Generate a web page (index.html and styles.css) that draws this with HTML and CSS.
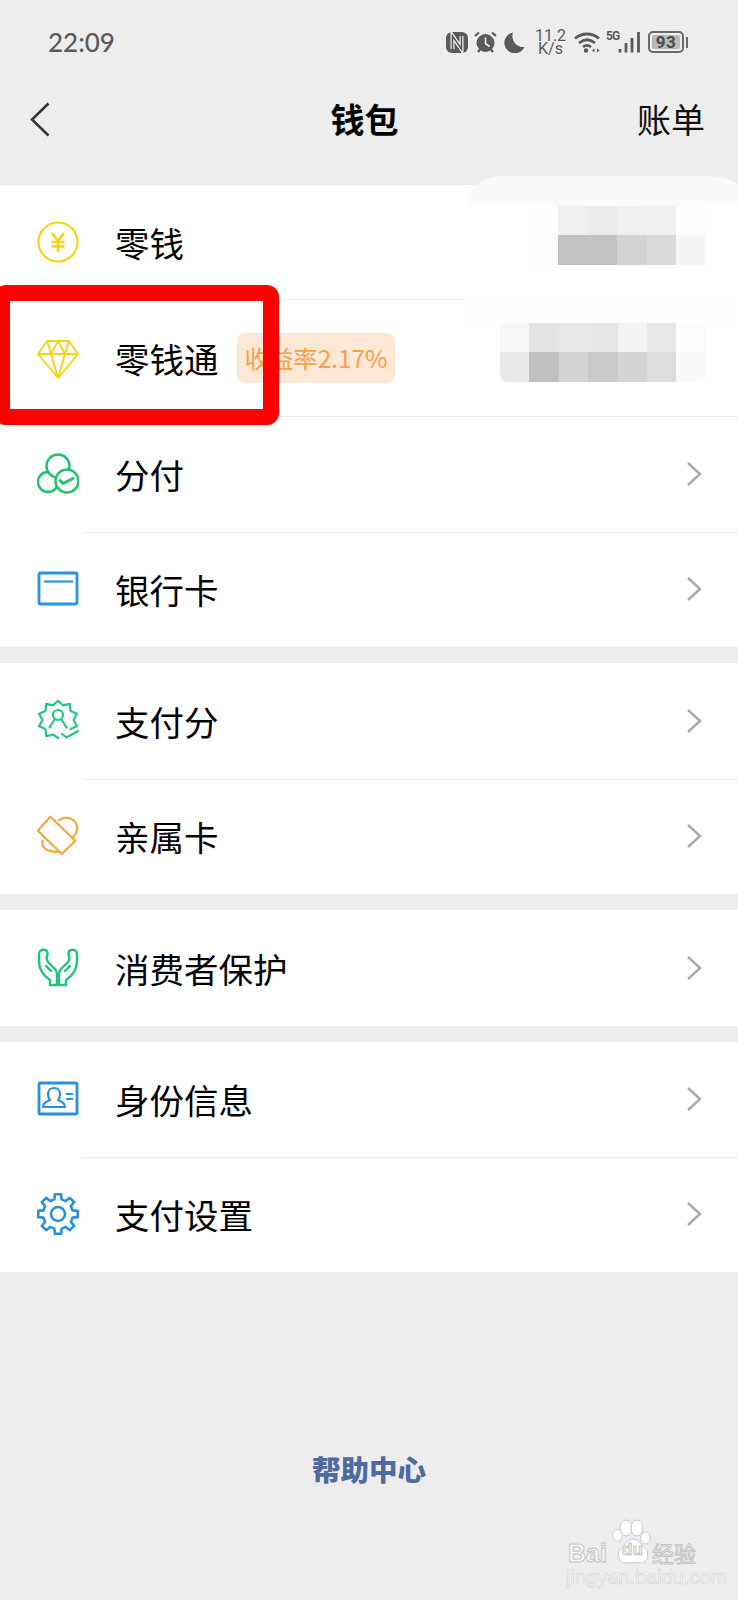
FILE: index.html
```html
<!DOCTYPE html>
<html lang="zh-CN">
<head>
<meta charset="utf-8">
<title>钱包</title>
<link rel="stylesheet" href="styles.css">
</head>
<body>
<div class="app">
  <header class="top">
    <div class="status">
      <span class="time">22:09</span>
      <div class="status-icons">
        <svg class="s-nfc" viewBox="0 0 22 21"><rect x="0" y="0" width="22" height="21" rx="6" fill="#5a5a5a"/><path d="M6.500 17V4l9 13V4" fill="none" stroke="#ededed" stroke-width="4"/><path d="M6.500 17V4l9 13V4" fill="none" stroke="#5a5a5a" stroke-width="1.600"/></svg>
        <svg class="s-alarm" viewBox="0 0 23 22"><circle cx="11.500" cy="12" r="9" fill="#5a5a5a"/><path d="M11.500 6.500v6l4 3" fill="none" stroke="#ededed" stroke-width="1.600"/><path d="M1 5l4-3.500M22 5l-4-3.500M4 21l2-2.500M19 21l-2-2.500" stroke="#5a5a5a" stroke-width="2.200"/></svg>
        <svg class="s-moon" viewBox="0 0 21 21"><path d="M9 .5A10.500 10.500 0 1 0 20.500 15 11 11 0 0 1 9 .5z" fill="#5a5a5a"/></svg>
        <div class="speed"><span>11.2</span><span>K/s</span></div>
        <svg class="s-wifi" viewBox="0 0 26 22"><path d="M1 7.500C8 1.500 18 1.500 25 7.500M5 12c5-4 11-4 16 0M9 16c2.500-2 5.500-2 8 0" fill="none" stroke="#5a5a5a" stroke-width="2.800"/><circle cx="12" cy="19.500" r="2.200" fill="#5a5a5a"/><path d="M18 19.500l2.500-2v4zM25.500 19.500l-2.500-2v4z" fill="#5a5a5a"/></svg>
        <div class="net">
          <span class="five-g">5G</span>
          <svg class="s-signal" viewBox="0 0 23 22"><g stroke="#5a5a5a" stroke-width="2.800"><path d="M3 18v3.500M9 12v9.500M15 7v14.500M21.500 1v20.500"/></g></svg>
        </div>
        <div class="battery"><div class="battery-body"><span class="battery-level">93</span></div><i class="battery-nub"></i></div>
      </div>
    </div>
    <nav class="nav">
      <div class="nav-side"><svg class="back" viewBox="0 0 20 35"><path d="M18.500 1.500L2 17.500l16.500 16" fill="none" stroke="#333" stroke-width="2.500"/></svg></div>
      <h1 class="title">钱包</h1>
      <div class="nav-side nav-right">账单</div>
    </nav>
  </header>

  <section class="group">
    <div class="row row-first">
      <svg class="ico" viewBox="0 0 42 42"><circle cx="21" cy="21" r="19.500" fill="none" stroke="#f8d20f" stroke-width="2"/><path d="M15 12l6 8 6-8M14.500 21h13M14.500 25.500h13M21 20v11" fill="none" stroke="#f8d20f" stroke-width="2.400"/></svg>
      <span class="label">零钱</span>
    </div>
    <div class="row row-second">
      <svg class="ico" viewBox="0 0 42 42"><path d="M10 4H32L41 17 21 41 1 17Z M1 17H41 M10 4L14 17 21 41 28 17 32 4 M14 17L21 4 28 17" fill="none" stroke="#f8d20f" stroke-width="1.800" stroke-linejoin="round"/></svg>
      <span class="label">零钱通</span>
      <span class="badge">收益率2.17%</span>
    </div>
    <div class="row">
      <svg class="ico" viewBox="0 0 42 42"><g fill="#fff" stroke="#1ec26e" stroke-width="2.400"><circle cx="11" cy="29" r="10"/><circle cx="21" cy="13" r="11.500"/><circle cx="30" cy="28" r="11.500"/></g><path d="M22.500 26.500L26 30.500 37 25" fill="none" stroke="#1ec26e" stroke-width="2.800"/></svg>
      <span class="label">分付</span>
      <svg class="chev" viewBox="0 0 16 26"><path d="M2 2l12 11L2 24" fill="none" stroke="#ababab" stroke-width="2.500"/></svg>
    </div>
    <div class="row">
      <svg class="ico" viewBox="0 0 42 42"><rect x="2" y="5" width="38" height="31" rx="1.500" fill="none" stroke="#2a93e0" stroke-width="2.800"/><path d="M7 13.500H36" stroke="#2a93e0" stroke-width="2.200"/></svg>
      <span class="label">银行卡</span>
      <svg class="chev" viewBox="0 0 16 26"><path d="M2 2l12 11L2 24" fill="none" stroke="#ababab" stroke-width="2.500"/></svg>
    </div>
  </section>

  <section class="group">
    <div class="row">
      <svg class="ico" viewBox="0 0 42 42"><g fill="none" stroke="#25c77f" stroke-width="2.200" stroke-linejoin="round" stroke-linecap="round"><path d="M33.500 29.100L40 26.200 36.500 20 40 13.800 33.500 10.900 32.800 3.800 25.800 5.300 21 0.800 16.200 5.300 9.200 3.800 8.500 10.900 2 13.800 5.500 20 2 26.200 8.500 29.100 9.200 36.200 16.200 34.700 21 38"/><circle cx="21" cy="15" r="5"/><path d="M17.500 19.500L12.500 27.500M24.500 19.500L29.500 27.500M25 34l4.500 3.500L41 31"/></g></svg>
      <span class="label">支付分</span>
      <svg class="chev" viewBox="0 0 16 26"><path d="M2 2l12 11L2 24" fill="none" stroke="#ababab" stroke-width="2.500"/></svg>
    </div>
    <div class="row">
      <svg class="ico" viewBox="0 0 42 42"><g fill="none" stroke="#f2a83e" stroke-width="2.200" stroke-linejoin="round" stroke-linecap="round"><path d="M13.300 1.700L.9 15.700 24.700 39 38.300 25.700Z"/><path d="M22 5C30 1 38 3 40 11 41 16 38 21 35 23"/><path d="M5.700 25.700C4 32 9 37 20.700 37"/></g></svg>
      <span class="label">亲属卡</span>
      <svg class="chev" viewBox="0 0 16 26"><path d="M2 2l12 11L2 24" fill="none" stroke="#ababab" stroke-width="2.500"/></svg>
    </div>
  </section>

  <section class="group">
    <div class="row">
      <svg class="ico" viewBox="0 0 42 42"><g fill="none" stroke="#1fc679" stroke-width="2.400" stroke-linejoin="round" stroke-linecap="round"><path d="M20 38H13V33C7 29 2 22 2 14V7C2 4 5 2 8 3 11 4 11 6 10 9 9 12 10 14 12 16L18 22C20 24 20 26 20 28Z M9 19L14 24"/><path transform="matrix(-1 0 0 1 42 0)" d="M20 38H13V33C7 29 2 22 2 14V7C2 4 5 2 8 3 11 4 11 6 10 9 9 12 10 14 12 16L18 22C20 24 20 26 20 28Z M9 19L14 24"/></g></svg>
      <span class="label">消费者保护</span>
      <svg class="chev" viewBox="0 0 16 26"><path d="M2 2l12 11L2 24" fill="none" stroke="#ababab" stroke-width="2.500"/></svg>
    </div>
  </section>

  <section class="group">
    <div class="row row-tight">
      <svg class="ico" viewBox="0 0 42 42"><g fill="none" stroke="#2a8fdd" stroke-linejoin="round"><rect x="2" y="5" width="38" height="31" rx="1.500" stroke-width="2.800"/><path stroke-width="2.200" d="M6 29C6 25 9 24 13 22 11 20 11 18 11 16 11 12 14 10 17 10 20 10 23 12 23 16 23 18 23 20 21 22 25 24 28 25 28 29Z"/><path stroke-width="2.200" d="M29 16H36M29 21H36"/></g></svg>
      <span class="label">身份信息</span>
      <svg class="chev" viewBox="0 0 16 26"><path d="M2 2l12 11L2 24" fill="none" stroke="#ababab" stroke-width="2.500"/></svg>
    </div>
    <div class="row row-tight">
      <svg class="ico" viewBox="-21 -21 42 42"><g fill="none" stroke="#2a8fdd" stroke-width="2.600" stroke-linejoin="round"><path d="M7.800-12.900L11.800-16.200 16.200-11.800 12.900-7.800 14.600-3.600 19.800-3.100V3.100L14.600 3.600 12.900 7.800 16.200 11.800 11.800 16.200 7.800 12.900 3.600 14.600 3.100 19.800H-3.100L-3.600 14.600-7.800 12.900-11.800 16.200-16.200 11.800-12.900 7.800-14.600 3.600-19.800 3.100V-3.100L-14.600-3.600-12.900-7.800-16.200-11.800-11.800-16.200-7.800-12.900-3.600-14.600-3.100-19.800H3.100L3.600-14.600Z"/><circle r="7"/></g></svg>
      <span class="label">支付设置</span>
      <svg class="chev" viewBox="0 0 16 26"><path d="M2 2l12 11L2 24" fill="none" stroke="#ababab" stroke-width="2.500"/></svg>
    </div>
  </section>

  <footer class="footer"><a class="help">帮助中心</a></footer>

  <div class="veil veil-top"></div>
  <div class="veil veil-mid"></div>
  <div class="mosaic mosaic-a">
    <i class="g-fe"></i><i class="g-ef"></i><i class="g-ea"></i><i class="g-f0"></i><i class="g-ef"></i><i class="g-fc"></i>
    <i class="g-fd"></i><i class="g-c2"></i><i class="g-c2"></i><i class="g-d2"></i><i class="g-d9"></i><i class="g-f5"></i>
  </div>
  <div class="mosaic mosaic-b">
    <i class="g-f7"></i><i class="g-e3"></i><i class="g-e8"></i><i class="g-e6"></i><i class="g-f3"></i><i class="g-e8"></i><i class="g-fc"></i>
    <i class="g-e9"></i><i class="g-c0"></i><i class="g-d4"></i><i class="g-cb"></i><i class="g-d4"></i><i class="g-de"></i><i class="g-f9"></i>
  </div>

  <div class="highlight"></div>

  <div class="watermark">
    <svg class="paw" viewBox="0 0 40 48"><g fill="#fff" stroke="#c8c8c8" stroke-width="1"><ellipse cx="14" cy="10" rx="6" ry="8"/><ellipse cx="25" cy="10" rx="6" ry="8"/><ellipse cx="5.500" cy="17.500" rx="5" ry="6"/><ellipse cx="33.500" cy="20" rx="5" ry="6"/><path d="M21 21C27 21 29 27 33 30 38 34 36 46 28 45 24 44.500 18 44.500 14 45 6 46 4 34 9 30 13 27 15 21 21 21Z"/></g></svg>
    <span class="wm-bai">Bai</span><span class="wm-du">du</span><span class="wm-jy">经验</span>
    <span class="wm-url">jingyan.baidu.com</span>
  </div>
</div>
</body>
</html>
```

FILE: styles.css
```css
* { box-sizing: border-box; }
html, body { margin: 0; padding: 0; }
body {
  background: #ededed;
  font-family: "Noto Sans CJK SC", "Noto Sans", sans-serif;
  color: #000;
}
.app {
  position: relative;
  width: 738px;
  height: 1600px;
  overflow: hidden;
  background: #ededed;
}

/* header */
.top { height: 185px; }
.status {
  height: 84px;
  display: flex;
  align-items: center;
  justify-content: space-between;
  padding: 0 50px 0 48px;
}
.time {
  font-family: Lato, "Noto Sans", sans-serif;
  font-size: 26px;
  font-weight: 500;
  color: #5a5a5a;
}
.status-icons { display: flex; align-items: center; }
.s-nfc { width: 22px; height: 21px; margin-right: 6px; }
.s-alarm { width: 23px; height: 22px; margin-right: 7px; }
.s-moon { width: 21px; height: 21px; margin-right: 10px; }
.speed {
  display: flex;
  flex-direction: column;
  align-items: center;
  width: 31px;
  margin-right: 8px;
  font-family: Roboto, sans-serif;
  font-size: 16px;
  line-height: 13px;
  color: #5a5a5a;
}
.s-wifi { width: 26px; height: 22px; margin-right: 6px; }
.net { display: flex; align-items: flex-start; margin-right: 8px; height: 22px; }
.five-g {
  font-family: Roboto, sans-serif;
  font-size: 12px;
  font-weight: 700;
  line-height: 11px;
  letter-spacing: -1px;
  color: #5a5a5a;
  width: 11px;
}
.s-signal { width: 23px; height: 22px; }
.battery { display: flex; align-items: center; }
.battery-body {
  width: 36px;
  height: 22px;
  border: 2px solid #6a6a6a;
  border-radius: 5px;
  padding: 2px;
  display: flex;
}
.battery-level {
  flex: 1;
  background: #b9b9b9;
  border-radius: 2px;
  font-family: Roboto, sans-serif;
  font-size: 17px;
  font-weight: 700;
  line-height: 14px;
  letter-spacing: 0.5px;
  text-align: center;
  color: #4c4c4c;
}
.battery-nub {
  display: block;
  width: 2px;
  height: 11px;
  margin-left: 2px;
  background: #6a6a6a;
}

.nav {
  height: 76px;
  padding: 0 33px 6px 24px;
  display: flex;
  align-items: center;
  justify-content: space-between;
}
.nav-side { width: 68px; font-size: 34px; line-height: 48px; display: flex; align-items: center; }
.nav-right { color: #111; }
.back { width: 20px; height: 35px; margin-left: 6px; }
.title { margin: 0; font-size: 34px; font-weight: 700; line-height: 48px; }

/* list */
.group { background: #fff; margin-bottom: 16px; }
.row {
  position: relative;
  height: 115.5px;
  display: flex;
  align-items: center;
  padding: 0 37px;
}
.row-first { height: 114px; }
.row-second { height: 117px; }
.row-tight { height: 115px; }
.row + .row::before {
  content: "";
  position: absolute;
  top: 0;
  left: 82px;
  right: 0;
  height: 1px;
  background: #ececec;
}
.ico { width: 42px; height: 42px; flex: none; margin-right: 36px; }
.label { font-size: 34.5px; line-height: 48px; color: #000; }
.badge {
  margin-left: 18px;
  width: 158px;
  height: 50px;
  padding-left: 8px;
  background: #fde8d5;
  border-radius: 8px;
  font-size: 24.4px;
  line-height: 50px;
  color: #f5a04a;
  white-space: nowrap;
}
.chev { width: 16px; height: 26px; margin-left: auto; margin-right: -1px; }

/* footer */
.footer { padding-top: 161px; text-align: center; }
.help {
  font-size: 28.5px;
  font-weight: 900;
  line-height: 40px;
  color: #4f6b9d;
}

/* blurred amounts laid over the list */
.veil { position: absolute; }
.veil-top {
  left: 467px;
  top: 176px;
  width: 271px;
  height: 30px;
  background: #fafafa;
  border-radius: 36px 30px 0 0 / 28px 12px 0 0;
}
.veil-mid {
  left: 465px;
  top: 296px;
  width: 273px;
  height: 27px;
  background: #fefefe;
}
.mosaic {
  position: absolute;
  display: grid;
  grid-auto-rows: 29.333px;
}
.mosaic i { display: block; }
.mosaic-a { left: 529px; top: 206px; grid-template-columns: repeat(6, 29.4px); }
.mosaic-b {
  left: 500px;
  top: 323px;
  grid-template-columns: repeat(7, 29.4px);
  border-radius: 0 0 8px 8px;
  overflow: hidden;
}
.g-fe { background: #fefefe; }
.g-fd { background: #fdfdfd; }
.g-fc { background: #fcfcfc; }
.g-f9 { background: #f9f9f9; }
.g-f7 { background: #f7f7f7; }
.g-f5 { background: #f5f5f5; }
.g-f3 { background: #f3f3f3; }
.g-f0 { background: #f0f0f0; }
.g-ef { background: #efefef; }
.g-ea { background: #eaeaea; }
.g-e9 { background: #e9e9e9; }
.g-e8 { background: #e8e8e8; }
.g-e6 { background: #e6e6e6; }
.g-e3 { background: #e3e3e3; }
.g-de { background: #dedede; }
.g-d9 { background: #d9d9d9; }
.g-d4 { background: #d4d4d4; }
.g-d2 { background: #d2d2d2; }
.g-cb { background: #cbcbcb; }
.g-c2 { background: #c2c2c2; }
.g-c0 { background: #c0c0c0; }

/* annotation box */
.highlight {
  position: absolute;
  left: -6px;
  top: 285px;
  width: 285px;
  height: 140px;
  border: 16px solid #fe0000;
  border-radius: 12px;
}

/* watermark */
.watermark { position: absolute; left: 566px; top: 1518px; width: 134px; height: 72px; }
.paw { position: absolute; left: 46px; top: 0; width: 40px; height: 48px; }
.watermark span {
  position: absolute;
  color: #f6f6f6;
  -webkit-text-stroke: 1px #c4c4c4;
  white-space: nowrap;
}
.wm-bai { left: 2px; top: 20px; font-family: "Liberation Sans", sans-serif; font-size: 25px; line-height: 30px; font-weight: 700; }
.wm-du { left: 56px; top: 22px; font-family: "Liberation Sans", sans-serif; font-size: 17px; line-height: 20px; font-weight: 700; }
.wm-jy { left: 86px; top: 20px; font-size: 22px; line-height: 28px; }
.watermark .wm-url { left: 0; top: 48px; font-family: "Liberation Sans", sans-serif; font-size: 20px; line-height: 22px; -webkit-text-stroke: 0.6px #d2d2d2; }
```
